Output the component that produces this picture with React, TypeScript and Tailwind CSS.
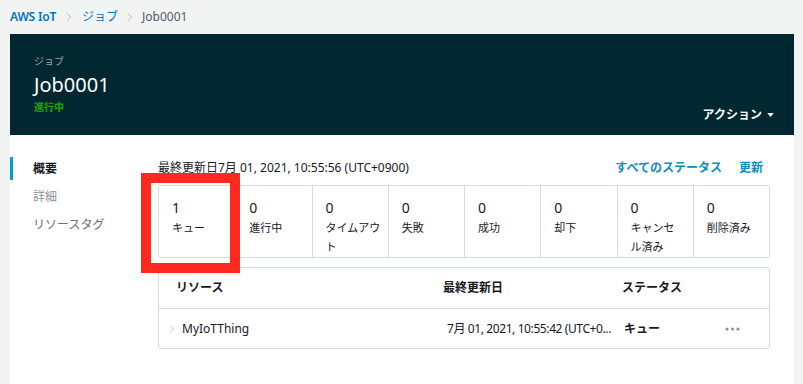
import { ChevronRight } from "lucide-react";

const font = { fontFamily: '"Noto Sans", "Noto Sans CJK JP", sans-serif' };

const statuses = [
  { count: 1, label: "キュー" },
  { count: 0, label: "進行中" },
  { count: 0, label: "タイムアウト" },
  { count: 0, label: "失敗" },
  { count: 0, label: "成功" },
  { count: 0, label: "却下" },
  { count: 0, label: "キャンセ\nル済み" },
  { count: 0, label: "削除済み" },
];

function Breadcrumb() {
  return (
    <div className="flex h-[34px] items-center text-[12px]">
      <span className="font-semibold tracking-[-0.2px] text-[#0073bb]">AWS IoT</span>
      <ChevronRight className="mx-[6px] h-[14px] w-[14px] text-[#aab7b8]" strokeWidth={1.5} />
      <span className="text-[#0073bb]">ジョブ</span>
      <ChevronRight className="mx-[5px] h-[14px] w-[14px] text-[#aab7b8]" strokeWidth={1.5} />
      <span className="text-[#545b64]">Job0001</span>
    </div>
  );
}

function Header() {
  return (
    <div className="flex h-[101px] items-start justify-between bg-[#012830] pl-[24px] pr-[20px]">
      <div className="flex flex-col pt-[19px]">
        <span className="text-[10px] leading-[16px] text-[#95a5a6]">ジョブ</span>
        <span className="mt-[4px] text-[20px] leading-[24px] text-white">Job0001</span>
        <span className="mt-[2px] text-[10px] font-black leading-[16px] text-[#1d9a02]">進行中</span>
      </div>
      <div className="mt-[72px] flex items-center gap-[5px] text-[12px] font-bold text-white">
        アクション
        <svg width="7" height="4" viewBox="0 0 8 5">
          <path d="M0 0h8L4 5z" fill="white" />
        </svg>
      </div>
    </div>
  );
}

function SideNav() {
  return (
    <div className="flex w-[148px] flex-col pt-[22px] text-[12px]">
      <div className="flex h-[23px] items-center">
        <div className="h-[23px] w-[3px] bg-[#00a1c9]" />
        <span className="ml-[20px] font-bold text-[#16191f]">概要</span>
      </div>
      <span className="ml-[23px] mt-[7px] leading-[20px] text-[#879596]">詳細</span>
      <span className="ml-[23px] mt-[8px] leading-[20px] text-[#687078]">リソースタグ</span>
    </div>
  );
}

function StatusBox() {
  return (
    <div className="mt-[8px] grid h-[73px] grid-cols-8 rounded-[3px] border border-[#d5dbdb]">
      {statuses.map((s, i) => (
        <div
          key={s.label}
          className={`flex flex-col pl-[13px] pr-[6px] pt-[12px] ${i > 0 ? "border-l border-[#d5dbdb]" : ""}`}
        >
          <span className="text-[14px] leading-[20px] text-[#16191f]">{s.count}</span>
          <span className="whitespace-pre-line text-[11px] leading-[19px] text-[#16191f]">{s.label}</span>
        </div>
      ))}
    </div>
  );
}

function ResourceTable() {
  return (
    <div className="mt-[9px] rounded-[3px] border border-[#d5dbdb] text-[12px]">
      <div className="flex h-[41px] items-center border-b border-[#d5dbdb] font-bold text-[#16191f]">
        <span className="w-[284px] pl-[17px]">リソース</span>
        <span className="w-[179px]">最終更新日</span>
        <span>ステータス</span>
      </div>
      <div className="flex h-[39px] items-center text-[#16191f]">
        <ChevronRight className="ml-[7px] h-[12px] w-[12px] text-[#aab7b8]" strokeWidth={1.5} />
        <span className="ml-[4px] w-[265px]">MyIoTThing</span>
        <span className="w-[177px] whitespace-nowrap tracking-[-0.4px]">7月 01, 2021, 10:55:42 (UTC+0...</span>
        <span className="w-[101px] font-bold">キュー</span>
        <svg width="15" height="4" viewBox="0 0 15 4">
          <circle cx="2" cy="2" r="1.6" fill="#879596" />
          <circle cx="7.5" cy="2" r="1.6" fill="#879596" />
          <circle cx="13" cy="2" r="1.6" fill="#879596" />
        </svg>
      </div>
    </div>
  );
}

export default function App() {
  return (
    <div className="relative h-[384px] w-[803px] overflow-hidden bg-[#f2f3f3] pl-[10px] pr-[9px]" style={font}>
      <Breadcrumb />
      <div className="h-[350px] bg-white">
        <Header />
        <div className="flex">
          <SideNav />
          <div className="w-[612px] pt-[24px]">
            <div className="flex h-[18px] items-center justify-between text-[12px]">
              <span className="text-[#16191f]">最終更新日7月 01, 2021, 10:55:56 (UTC+0900)</span>
              <div className="flex gap-[17px] pr-[7px] font-bold text-[#0a8fbb]">
                <span>すべてのステータス</span>
                <span>更新</span>
              </div>
            </div>
            <StatusBox />
            <ResourceTable />
          </div>
        </div>
      </div>
      <div className="absolute left-[141px] top-[173px] h-[100px] w-[99px] border-[10px] border-[#ff2a1f]" />
    </div>
  );
}
